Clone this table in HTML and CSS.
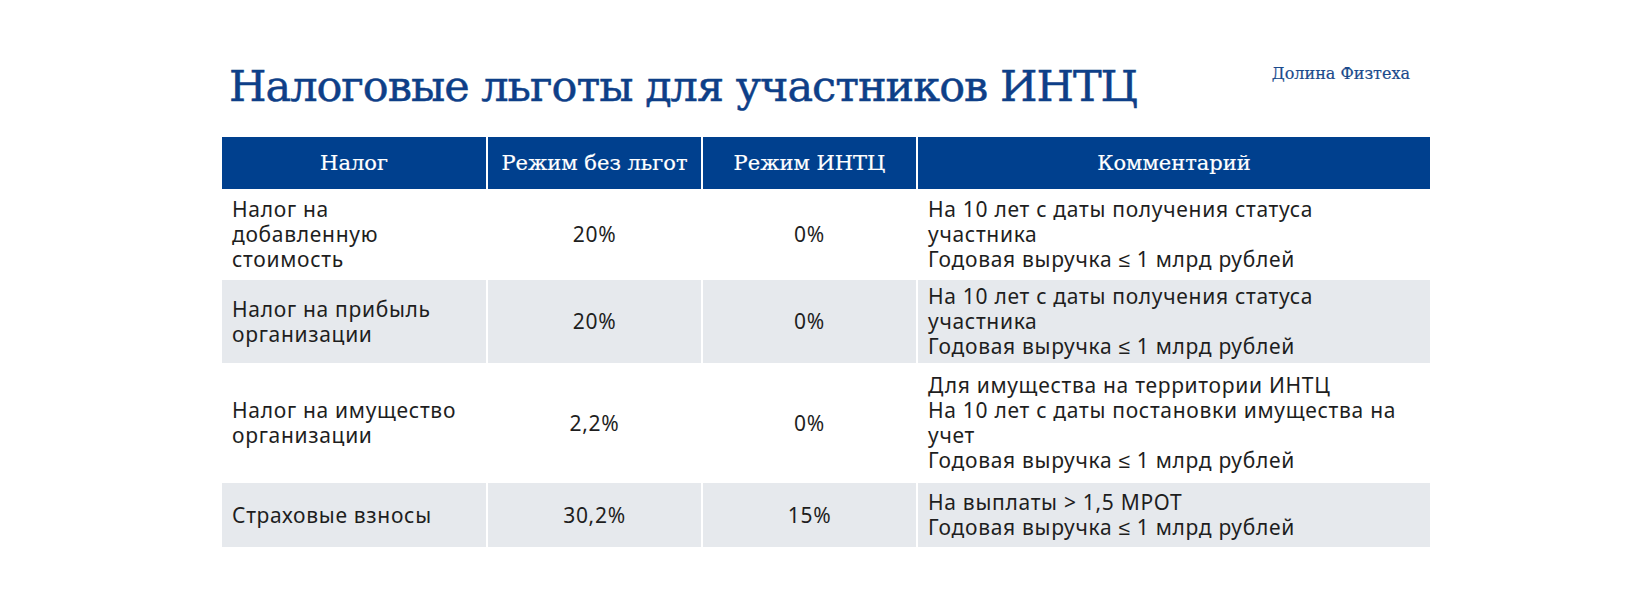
FILE: index.html
```html
<!DOCTYPE html>
<html lang="ru">
<head>
<meta charset="utf-8">
<title>Налоговые льготы для участников ИНТЦ</title>
<link rel="stylesheet" href="styles.css">
</head>
<body>
<div class="slide">
  <header class="top">
    <h1 class="title">Налоговые льготы для участников ИНТЦ</h1>
    <div class="brand">Долина Физтеха</div>
  </header>
  <table class="tax">
    <colgroup>
      <col class="c1"><col class="c2"><col class="c3"><col class="c4">
    </colgroup>
    <thead>
      <tr class="head">
        <th>Налог</th>
        <th>Режим без льгот</th>
        <th>Режим ИНТЦ</th>
        <th>Комментарий</th>
      </tr>
    </thead>
    <tbody>
      <tr class="r1">
        <td class="name">Налог на<br>добавленную<br>стоимость</td>
        <td class="num">20%</td>
        <td class="num">0%</td>
        <td class="note">На 10 лет с даты получения статуса<br>участника<br>Годовая выручка ≤ 1 млрд рублей</td>
      </tr>
      <tr class="r2 alt">
        <td class="name">Налог на прибыль<br>организации</td>
        <td class="num">20%</td>
        <td class="num">0%</td>
        <td class="note">На 10 лет с даты получения статуса<br>участника<br>Годовая выручка ≤ 1 млрд рублей</td>
      </tr>
      <tr class="r3">
        <td class="name">Налог на имущество<br>организации</td>
        <td class="num">2,2%</td>
        <td class="num">0%</td>
        <td class="note">Для имущества на территории ИНТЦ<br>На 10 лет с даты постановки имущества на<br>учет<br>Годовая выручка ≤ 1 млрд рублей</td>
      </tr>
      <tr class="r4 alt">
        <td class="name">Страховые взносы</td>
        <td class="num">30,2%</td>
        <td class="num">15%</td>
        <td class="note">На выплаты &gt; 1,5 МРОТ<br>Годовая выручка ≤ 1 млрд рублей</td>
      </tr>
    </tbody>
  </table>
</div>
</body>
</html>
```

FILE: styles.css
```css
html, body {
  margin: 0;
  padding: 0;
  background: #ffffff;
}

.slide {
  width: 1650px;
  height: 600px;
  box-sizing: border-box;
  padding: 0 0 0 220px;
}

.top {
  display: flex;
  align-items: flex-start;
  width: 1210px;
  height: 135px;
  box-sizing: border-box;
}

.title {
  margin: 58px 0 0 9px;
  font-family: "DejaVu Serif", serif;
  font-weight: normal;
  font-size: 43px;
  line-height: 56px;
  color: #0e3f88;
  letter-spacing: -1px;
  white-space: nowrap;
  -webkit-text-stroke: 0.5px #0e3f88;
}

.brand {
  margin: 64px 0 0 auto;
  padding-right: 20px;
  font-family: "DejaVu Serif", serif;
  font-size: 16px;
  color: #1a4a8c;
  -webkit-text-stroke: 0.2px #1a4a8c;
}

.tax {
  border-collapse: collapse;
  table-layout: fixed;
  width: 1210px;
  font-family: "Noto Sans", sans-serif;
  font-size: 21px;
  line-height: 25px;
  letter-spacing: 0.7px;
  color: #1e1e1e;
}

.tax col.c1 { width: 266px; }
.tax col.c2 { width: 215px; }
.tax col.c3 { width: 215px; }
.tax col.c4 { width: 514px; }

.tax th, .tax td {
  border: 2px solid #ffffff;
  padding: 0 10px;
  vertical-align: middle;
}

.tax th {
  background: #00408e;
  color: #ffffff;
  font-family: "DejaVu Serif", serif;
  font-weight: normal;
  font-size: 21px;
  letter-spacing: 0;
  text-align: center;
  -webkit-text-stroke: 0.2px #ffffff;
}

.head { height: 54px; }
.r1 { height: 89px; }
.r2 { height: 85px; }
.r3 { height: 118px; }
.r4 { height: 66px; }

.alt td { background: #e6e9ed; }

.num { text-align: center; }
.name { padding-left: 8px; }
.note { padding-left: 11px; }
```
